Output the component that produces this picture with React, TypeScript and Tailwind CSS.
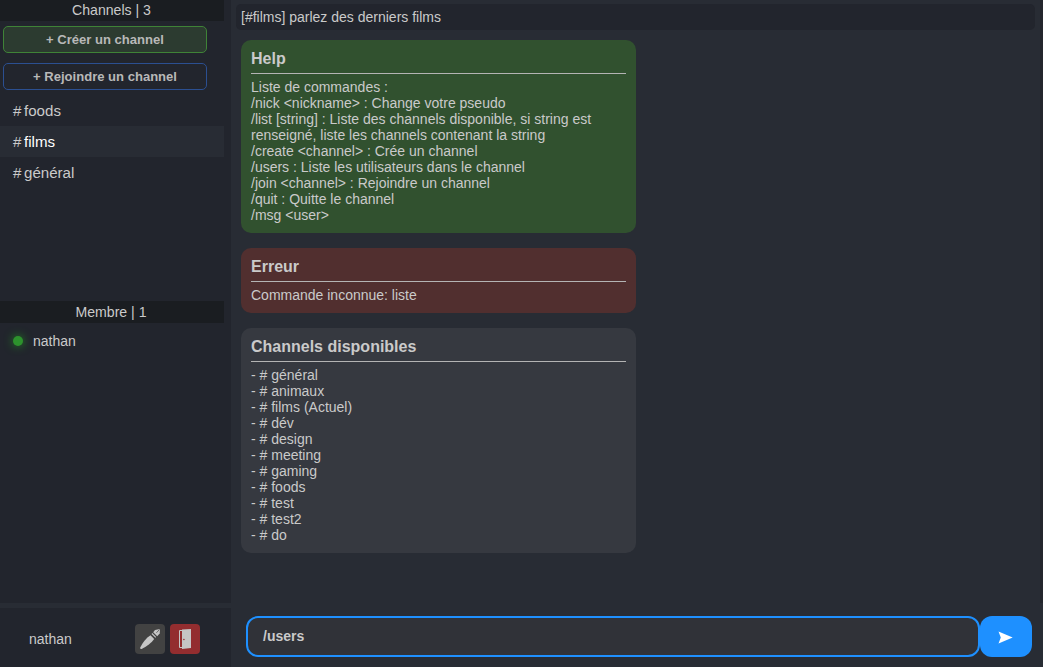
import type { ReactNode } from "react";

const channels = ["foods", "films", "général"];

const helpLines = [
  "Liste de commandes :",
  "/nick <nickname> : Change votre pseudo",
  "/list [string] : Liste des channels disponible, si string est renseigné, liste les channels contenant la string",
  "/create <channel> : Crée un channel",
  "/users : Liste les utilisateurs dans le channel",
  "/join <channel> : Rejoindre un channel",
  "/quit : Quitte le channel",
  "/msg <user>",
];

const available = [
  "général",
  "animaux",
  "films (Actuel)",
  "dév",
  "design",
  "meeting",
  "gaming",
  "foods",
  "test",
  "test2",
  "do",
];

function Card({ title, color, children }: { title: string; color: string; children: ReactNode }) {
  return (
    <section className={`w-[395px] rounded-[10px] px-2.5 pt-2.5 pb-2.5 ${color}`}>
      <h2 className="h-6 border-b border-[#b4b4b4] text-[16px] leading-[18px] font-bold">{title}</h2>
      <div className="pt-[5px] leading-4">{children}</div>
    </section>
  );
}

function PenIcon() {
  return (
    <svg width="20" height="20" viewBox="0 0 20 20" fill="#c5c5c5">
      <path d="M20 0 L19.7 4.6 L17.2 7.2 L13.2 3.2 L15 1 Z" />
      <path d="M12.3 4.1 L16.2 8 L15.4 8.8 L11.5 4.9 Z" />
      <path d="M10.5 6.2 L14.2 9.9 C11.6 13.6 7.4 17 1.6 20 C.6 20 0 19.3 .2 18.4 C2.8 13 6.2 9 10.5 6.2 Z" />
      <path d="M19.6 .4 L16.4 3.8" stroke="#424242" strokeWidth=".7" />
    </svg>
  );
}

function DoorIcon() {
  return (
    <svg width="12" height="20" viewBox="0 0 12 20">
      <path d="M3 1.5 H.5 V18.5 H3" fill="none" stroke="#c5c5c5" strokeWidth="1" />
      <path d="M3 .6 L12 0 V19 L3 20 Z" fill="#c5c5c5" />
      <circle cx="4.9" cy="10.5" r=".8" fill="#932d2f" />
    </svg>
  );
}

export default function App() {
  return (
    <div className="flex h-[667px] w-[1043px] overflow-hidden bg-[#282c34] font-['Liberation_Sans',Arial,sans-serif] text-[14px] leading-4 text-[#cacaca]">
      <aside className="flex w-[231px] shrink-0 flex-col">
        <div className="flex h-[603px] flex-col bg-[#22252d]">
          <div className="h-[301px]">
            <h1 className="h-[21px] w-56 bg-[#1a1d21] pt-0.5 pr-px text-center text-[14.1px]">Channels | 3</h1>
            <div className="flex w-[207px] flex-col gap-2.5 pt-[5px] pl-[3px]">
              <button className="h-[27px] rounded-[5px] border border-[#3f8337] bg-[#2c3b30] text-[13.05px] font-bold text-[#b8b8b8]">
                + Créer un channel
              </button>
              <button className="h-[27px] rounded-[5px] border border-[#2b4f91] text-[13.05px] font-bold text-[#b8b8b8]">
                + Rejoindre un channel
              </button>
            </div>
            <nav className="w-56 pt-[5px]">
              {channels.map((name) => (
                <div
                  key={name}
                  className={`flex h-[31px] items-center gap-[3px] pl-[13px] text-[15.1px] ${name === "films" ? "bg-[#282c34]" : ""}`}
                >
                  <span className="w-2">#</span>
                  <span className={name === "films" ? "text-white" : ""}>{name}</span>
                </div>
              ))}
            </nav>
          </div>
          <h1 className="h-[22px] w-56 bg-[#1a1d21] pt-[3px] pr-0.5 text-center text-[14.1px]">Membre | 1</h1>
          <div className="flex h-9 items-center gap-2.5 pl-[13px]">
            <span className="size-2.5 rounded-full bg-[#2d922d] shadow-[0_0_10px_#228b22]" />
            <span>nathan</span>
          </div>
        </div>
        <footer className="mt-[5px] flex flex-1 items-center gap-[5px] bg-[#22252d] pt-[3px] pl-[29px]">
          <span className="w-[101px]">nathan</span>
          <button className="flex size-[30px] items-center justify-center rounded-[4px] bg-[#424242]">
            <PenIcon />
          </button>
          <button className="flex size-[30px] items-center justify-center rounded-[4px] bg-[#932d2f]">
            <DoorIcon />
          </button>
        </footer>
      </aside>
      <main className="flex flex-1 flex-col">
        <div className="flex h-[603px]">
          <div className="flex flex-1 flex-col gap-[15px] pt-1 pl-[5px]">
            <header className="-mb-[5px] h-[26px] w-[799px] rounded-[5px] bg-[#22252d] pt-[5px] pl-[5px]">
              [#films] parlez des derniers films
            </header>
            <div className="flex flex-col gap-[15px] pl-[5px]">
              <Card title="Help" color="bg-[#31512f]">
                {helpLines.map((line) => (
                  <p key={line}>{line}</p>
                ))}
              </Card>
              <Card title="Erreur" color="bg-[#512f2f]">
                <p>Commande inconnue: liste</p>
              </Card>
              <Card title="Channels disponibles" color="bg-[#363940]">
                {available.map((name) => (
                  <p key={name}>- # {name}</p>
                ))}
              </Card>
            </div>
          </div>
          <div className="w-[3px] bg-[#23262d]" />
        </div>
        <form className="flex pt-[13px] pl-[15px]">
          <div className="flex h-[41px] w-[734px] items-center rounded-[12px] border-2 border-[#1e90ff] bg-[#303238] pb-0.5 pl-[15px] text-[14px] font-bold">
            /users
          </div>
          <button
            type="button"
            className="flex h-[41px] w-[52px] items-center justify-center rounded-[12px] bg-[#1e90ff] pt-0.5 pr-px"
          >
            <svg width="15" height="13" viewBox="0 0 15 13" fill="white">
              <path d="M.5 .6 L14.7 6.5 L.5 12.4 L2.8 6.5 Z" />
            </svg>
          </button>
        </form>
      </main>
    </div>
  );
}
